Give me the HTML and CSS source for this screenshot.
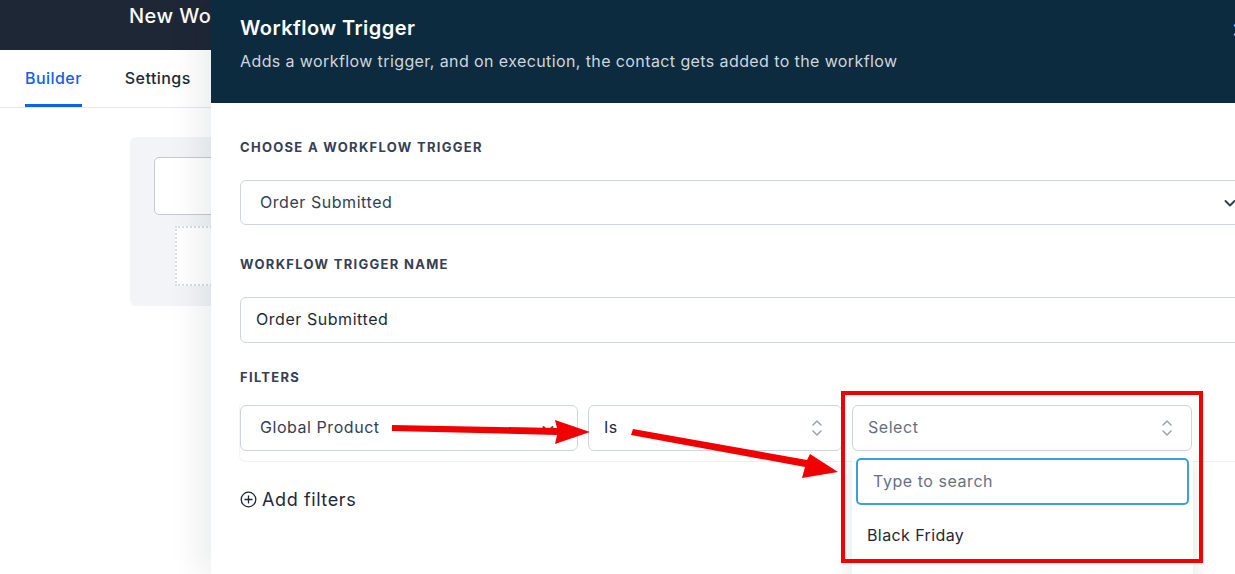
FILE: index.html
```html
<!DOCTYPE html>
<html lang="en">
<head>
<meta charset="utf-8">
<title>Workflow Trigger</title>
<link rel="stylesheet" href="styles.css">
</head>
<body>
<div class="app">
  <header class="topbar"><span class="app-title">New Workflow</span></header>
  <nav class="tabs">
    <a class="tab active">Builder</a>
    <a class="tab">Settings</a>
  </nav>
  <main class="canvas">
    <div class="canvas-card">
      <div class="node"></div>
      <div class="node-add"></div>
    </div>
  </main>
</div>

<aside class="drawer">
  <div class="drawer-head">
    <h1 class="drawer-title">Workflow Trigger</h1>
    <p class="drawer-sub">Adds a workflow trigger, and on execution, the contact gets added to the workflow</p>
    <span class="close">×</span>
  </div>
  <div class="drawer-body">
    <div class="label">Choose a workflow trigger</div>
    <div class="select big">
      <span class="val">Order Submitted</span>
      <svg class="chev" width="14" height="14" viewBox="0 0 14 14"><path d="M2.5 5l4.5 4.5L11.5 5" fill="none" stroke="#344054" stroke-width="2" stroke-linecap="round" stroke-linejoin="round"/></svg>
    </div>
    <div class="label">Workflow trigger name</div>
    <div class="input"><span class="val">Order Submitted</span></div>
    <div class="label">Filters</div>
    <div class="filter-row">
      <div class="select f1">
        <span class="val">Global Product</span>
        <svg class="chev" width="14" height="14" viewBox="0 0 14 14"><path d="M2.5 5l4.5 4.5L11.5 5" fill="none" stroke="#475467" stroke-width="2" stroke-linecap="round" stroke-linejoin="round"/></svg>
      </div>
      <div class="select f2">
        <span class="val">Is</span>
        <svg class="updown" width="12" height="20" viewBox="0 0 12 20"><path d="M2 7l4-4 4 4M2 13l4 4 4-4" fill="none" stroke="#98a2b3" stroke-width="1.5" stroke-linecap="round" stroke-linejoin="round"/></svg>
      </div>
      <div class="select f3">
        <span class="val placeholder">Select</span>
        <svg class="updown" width="12" height="20" viewBox="0 0 12 20"><path d="M2 7l4-4 4 4M2 13l4 4 4-4" fill="none" stroke="#98a2b3" stroke-width="1.5" stroke-linecap="round" stroke-linejoin="round"/></svg>
        <div class="dropdown">
          <div class="search">Type to search</div>
          <div class="option">Black Friday</div>
        </div>
      </div>
    </div>
    <div class="add-filters">
      <svg width="17" height="17" viewBox="0 0 17 17"><circle cx="8.5" cy="8.5" r="7.3" fill="none" stroke="#1d2939" stroke-width="1.3"/><path d="M8.5 4.5v8M4.5 8.5h8" stroke="#1d2939" stroke-width="1.3"/></svg>
      <span>Add filters</span>
    </div>
  </div>
</aside>

<div class="highlight"></div>
<svg class="annot" width="1235" height="574" viewBox="0 0 1235 574">
  <polygon fill="#f20000" points="392,425 557,428 555,420 590,432 555,444 557,435 392,431"/>
  <polygon fill="#f20000" points="633,429 807,460 810,454 838,472 802,478 805,467 631,435"/>
</svg>
</body>
</html>
```

FILE: styles.css
```css
* { box-sizing: border-box; }
html, body {
  margin: 0;
  padding: 0;
  width: 1235px;
  height: 574px;
  overflow: hidden;
  background: #ffffff;
  font-family: Inter, "Noto Sans", "Liberation Sans", sans-serif;
  letter-spacing: 0.45px;
}

.app { display: flex; flex-direction: column; height: 574px; }

.topbar {
  height: 50px;
  background: #1e2736;
  display: flex;
  align-items: center;
  padding-left: 129px;
}
.app-title {
  color: #ffffff;
  font-size: 20px;
  font-weight: 500;
  white-space: nowrap;
  margin-top: -18px;
}

.tabs {
  height: 58px;
  display: flex;
  gap: 43px;
  padding-left: 25px;
  border-bottom: 1px solid #e4e7ec;
}
.tab {
  display: flex;
  align-items: center;
  font-size: 16px;
  font-weight: 500;
  color: #1d2939;
  border-bottom: 3px solid transparent;
  padding-top: 2px;
}
.tab.active { color: #155eef; border-bottom-color: #155eef; }

.canvas { flex: 1; padding: 29px 0 0 130px; }
.canvas-card {
  width: 400px;
  height: 169px;
  background: #f2f4f7;
  border-radius: 6px;
  padding: 20px 0 0 24px;
}
.node {
  width: 200px;
  height: 58px;
  background: #ffffff;
  border: 1px solid #c4cad4;
  border-radius: 5px;
}
.node-add {
  width: 180px;
  height: 60px;
  margin: 11px 0 0 21px;
  background: #ffffff;
  border: 2px dotted #d8dce3;
}

.drawer {
  position: absolute;
  top: 0;
  left: 211px;
  width: 1070px;
  height: 574px;
  background: #ffffff;
  box-shadow: -12px 0 30px rgba(16, 24, 40, 0.08);
}
.drawer-head {
  height: 103px;
  background: #0d2b3f;
  padding: 14px 29px 0;
  position: relative;
}
.drawer-title {
  margin: 0;
  color: #ffffff;
  font-size: 20px;
  font-weight: 600;
  line-height: 28px;
}
.drawer-sub {
  margin: 7px 0 0;
  color: #d0d5dd;
  font-size: 16px;
  line-height: 24px;
  letter-spacing: 0.4px;
}
.close {
  position: absolute;
  top: 14px;
  left: 1020px;
  color: #c8d2dc;
  font-size: 26px;
  line-height: 28px;
}

.drawer-body { padding: 36px 36px 0 29px; }
.label {
  font-size: 13px;
  line-height: 16px;
  font-weight: 700;
  color: #344054;
  text-transform: uppercase;
  letter-spacing: 1.3px;
  margin-bottom: 25px;
}
.select, .input {
  position: relative;
  height: 45px;
  border: 1px solid #d0d5dd;
  border-radius: 6px;
  display: flex;
  align-items: center;
  font-size: 16px;
  letter-spacing: 0.55px;
  color: #344054;
  background: #ffffff;
}
.val { margin-top: -2px; }
.select.big { padding-left: 19px; margin-bottom: 31px; }
.select.big .chev { position: absolute; left: 982px; top: 15px; }
.input { padding-left: 15px; color: #1d2939; height: 46px; margin-bottom: 26px; }
.input .val { margin-top: -3px; }
.input + .label { margin-bottom: 20px; }

.filter-row {
  display: flex;
  gap: 10px;
  padding-bottom: 10px;
  border-bottom: 1px solid #eef0f3;
  border-bottom-left-radius: 6px;
  box-shadow: -1px 0 0 #f5f6f8;
  margin-bottom: 27px;
}
.filter-row .select { height: 46px; }
.f1 { width: 338px; padding-left: 19px; }
.f1 .chev { position: absolute; right: 22px; top: 16px; }
.f2 { width: 254px; padding-left: 15px; color: #1d2939; }
.f3 { width: 340px; padding-left: 15px; }
.updown { position: absolute; right: 18px; top: 12px; }
.placeholder { color: #667085; }

.dropdown {
  position: absolute;
  top: 47px;
  left: -1px;
  width: 341px;
  height: 130px;
  background: #ffffff;
  box-shadow: 0 8px 20px rgba(16, 24, 40, 0.12);
  padding: 5px 4px 0;
  border-radius: 4px;
}
.search {
  height: 47px;
  border: 2px solid #3b9fdb;
  border-radius: 5px;
  padding: 0 0 2px 15px;
  display: flex;
  align-items: center;
  font-size: 16px;
  color: #667085;
  letter-spacing: 0.55px;
}
.option {
  padding: 20px 0 0 11px;
  font-size: 16px;
  color: #1d2939;
  letter-spacing: 0.4px;
}

.add-filters {
  display: flex;
  align-items: center;
  gap: 5px;
  font-size: 18px;
  color: #1d2939;
  letter-spacing: 0.6px;
}

.highlight {
  position: absolute;
  left: 841px;
  top: 391px;
  width: 362px;
  height: 172px;
  border: 4px solid #f20000;
}
.annot { position: absolute; left: 0; top: 0; pointer-events: none; }
```
